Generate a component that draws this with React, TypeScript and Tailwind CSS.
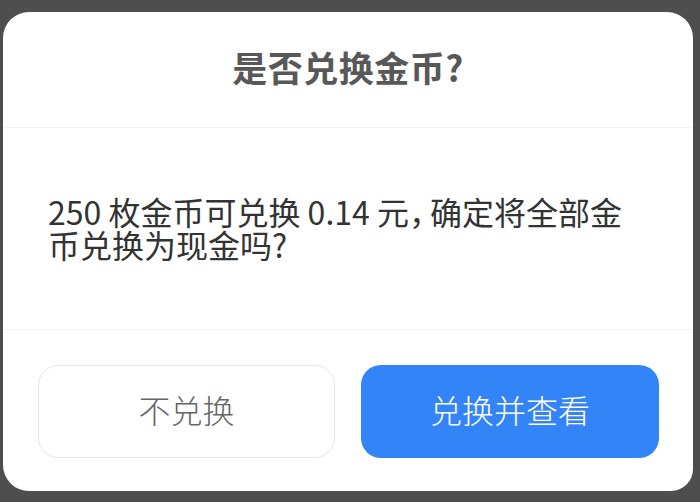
export default function App() {
  const font = { fontFamily: '"Noto Sans CJK SC", "Noto Sans", sans-serif' };
  return (
    <div className="w-[700px] h-[502px] bg-[#4e4e4e] pt-[12px] pl-[3px] pr-[7px]" style={font}>
      <div className="h-[479px] bg-white rounded-[26px] rounded-br-[22px] flex flex-col">
        <div className="h-[116px] flex items-center justify-center border-b border-[#f3f3f3]">
          <span className="text-[35px] leading-[40px] font-bold text-[#585858] -mt-[6px] tracking-[0.5px]">是否兑换金币?</span>
        </div>
        <div className="h-[202px] flex flex-col justify-center pl-[45px] pr-[10px] border-b border-[#f3f3f3] text-[32px] leading-[33px] text-[#333333]">
          <div className="h-[33px] -mt-[2px]">
            250 枚金币可兑换 0.14 元<span className="tracking-[-11px]">，</span>确定将全部金
          </div>
          <div className="h-[33px]">币兑换为现金吗?</div>
        </div>
        <div className="flex gap-[26px] pl-[35px] pt-[35px]">
          <button className="w-[297px] h-[93px] pb-[6px] rounded-[20px] border border-[#e6e6e6] bg-white text-[32px] text-[#666666] font-light">
            不兑换
          </button>
          <button className="w-[298px] h-[93px] pb-[6px] rounded-[20px] bg-[#3385f7] text-[32px] text-white font-light">
            兑换并查看
          </button>
        </div>
      </div>
    </div>
  );
}
